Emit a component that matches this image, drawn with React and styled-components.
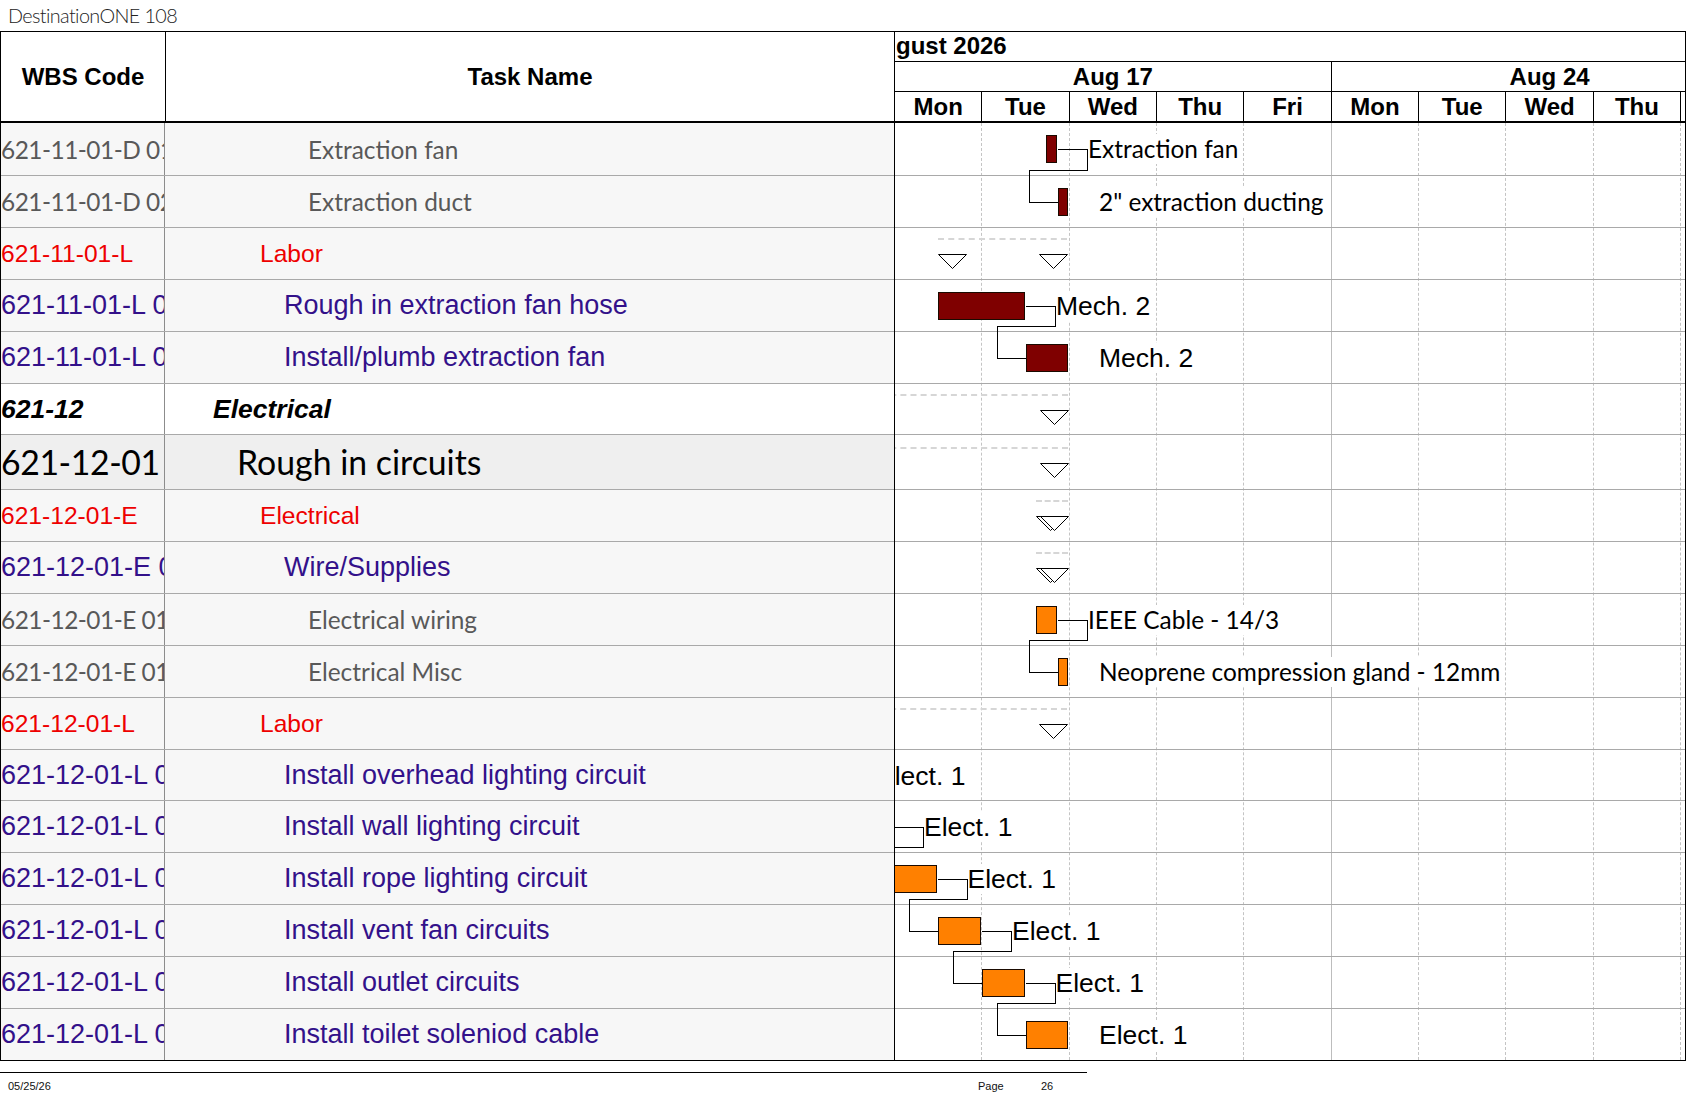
import React from 'react';
import styled, { createGlobalStyle } from 'styled-components';

const ARIAL = '"Liberation Sans", Arial, Helvetica, sans-serif';
const HUMANIST = 'Lato, "Open Sans", "Noto Sans", sans-serif';

const CHART_X = 895; // page x of the chart's inner left edge
const DAY = 87.35;
const DAYS = ['Mon', 'Tue', 'Wed', 'Thu', 'Fri', 'Mon', 'Tue', 'Wed', 'Thu', 'Fri'];

const MAROON = '#7f0000';
const ORANGE = '#ff8000';

// bar / summary positions are page x coordinates on the timeline
const ROWS = [
    { wbs: '621-11-01-D 01', name: 'Extraction fan', kind: 'detail', h: 53,
        bar: [1046, 1057], color: MAROON, label: 'Extraction fan', font: 'cal', link: true },
    { wbs: '621-11-01-D 02', name: 'Extraction duct', kind: 'detail', h: 52,
        bar: [1057.5, 1068], color: MAROON, label: '2" extraction ducting', font: 'cal' },
    { wbs: '621-11-01-L', name: 'Labor', kind: 'group', h: 52, summary: [938, 1067], start: true },
    { wbs: '621-11-01-L 01', name: 'Rough in extraction fan hose', kind: 'task', h: 52,
        bar: [937.5, 1025], color: MAROON, label: 'Mech. 2', link: true },
    { wbs: '621-11-01-L 02', name: 'Install/plumb extraction fan', kind: 'task', h: 52,
        bar: [1025.5, 1068], color: MAROON, label: 'Mech. 2' },
    { wbs: '621-12', name: 'Electrical', kind: 'summary', h: 51, summary: [860, 1068] },
    { wbs: '621-12-01', name: 'Rough in circuits', kind: 'phase', h: 55, summary: [860, 1068] },
    { wbs: '621-12-01-E', name: 'Electrical', kind: 'group', h: 52, summary: [1036, 1068], start: true },
    { wbs: '621-12-01-E 01', name: 'Wire/Supplies', kind: 'task', h: 52, summary: [1036, 1068], start: true },
    { wbs: '621-12-01-E 01.01', name: 'Electrical wiring', kind: 'detail', h: 52,
        bar: [1036, 1057], color: ORANGE, label: 'IEEE Cable - 14/3', font: 'cal', link: true },
    { wbs: '621-12-01-E 01.02', name: 'Electrical Misc', kind: 'detail', h: 52,
        bar: [1057.5, 1068], color: ORANGE, label: 'Neoprene compression gland - 12mm', font: 'cal' },
    { wbs: '621-12-01-L', name: 'Labor', kind: 'group', h: 52, summary: [860, 1067] },
    { wbs: '621-12-01-L 01', name: 'Install overhead lighting circuit', kind: 'task', h: 51,
        bar: [760, 846], color: ORANGE, label: 'Elect. 1', link: true },
    { wbs: '621-12-01-L 02', name: 'Install wall lighting circuit', kind: 'task', h: 52,
        bar: [800, 893], color: ORANGE, label: 'Elect. 1', link: true },
    { wbs: '621-12-01-L 03', name: 'Install rope lighting circuit', kind: 'task', h: 52,
        bar: [850, 936.5], color: ORANGE, label: 'Elect. 1', link: true },
    { wbs: '621-12-01-L 04', name: 'Install vent fan circuits', kind: 'task', h: 52,
        bar: [937.5, 981], color: ORANGE, label: 'Elect. 1', link: true },
    { wbs: '621-12-01-L 05', name: 'Install outlet circuits', kind: 'task', h: 52,
        bar: [981.5, 1024.5], color: ORANGE, label: 'Elect. 1', link: true },
    { wbs: '621-12-01-L 06', name: 'Install toilet soleniod cable', kind: 'task', h: 51, last: true,
        bar: [1025.5, 1068], color: ORANGE, label: 'Elect. 1' },
];

const KINDS = {
    detail: { color: '#595959', font: HUMANIST, size: 24.4, weight: 400, italic: false, indent: 143, bg: '#f7f7f7', track: -0.5 },
    group: { color: '#ee0000', font: ARIAL, size: 24.6, weight: 400, italic: false, indent: 95, bg: '#f7f7f7', track: 0 },
    task: { color: '#33118a', font: ARIAL, size: 27, weight: 400, italic: false, indent: 119, bg: '#f7f7f7', track: 0 },
    summary: { color: '#000', font: ARIAL, size: 26.5, weight: 700, italic: true, indent: 48, bg: '#fff', track: 0 },
    phase: { color: '#000', font: HUMANIST, size: 33.8, weight: 400, italic: false, indent: 72, bg: '#efefef', track: -0.4 },
};

const GlobalStyle = createGlobalStyle`
    html, body {
        margin: 0;
        padding: 0;
        background: #fff;
    }
    body {
        font-family: ${ARIAL};
        color: #000;
    }
`;

const Page = styled.div`
    width: 1687px;
    height: 1097px;
    position: relative;
    overflow: hidden;
`;

const Title = styled.div`
    height: 31px;
    box-sizing: border-box;
    padding: 3px 0 0 8px;
    font-family: ${HUMANIST};
    font-weight: 300;
    font-size: 19.8px;
    line-height: 24px;
    letter-spacing: -0.6px;
    color: #222;
`;

const Sheet = styled.div`
    width: 1686px;
    box-sizing: border-box;
    border: 1px solid #000;
    display: flex;
    flex-direction: column;
`;

const Header = styled.div`
    display: flex;
    height: 91px;
    box-sizing: border-box;
    border-bottom: 2px solid #000;
`;

const HeadCell = styled.div`
    width: ${(p) => p.$width}px;
    flex: 0 0 auto;
    box-sizing: border-box;
    border-right: 1px solid #000;
    display: flex;
    align-items: center;
    justify-content: center;
    font-weight: 700;
    font-size: 24px;
`;

const Timescale = styled.div`
    flex: 1;
    display: flex;
    flex-direction: column;
    overflow: hidden;
`;

const MonthRow = styled.div`
    height: 30px;
    box-sizing: border-box;
    border-bottom: 1px solid #000;
    font-weight: 700;
    font-size: 24px;
    line-height: 28px;
    white-space: nowrap;
    text-indent: -31px;
`;

const ScaleRow = styled.div`
    display: flex;
    height: ${(p) => p.$height}px;
    box-sizing: border-box;
    border-bottom: ${(p) => (p.$ruled ? '1px solid #000' : 'none')};
`;

const ScaleCell = styled.div`
    flex: 0 0 ${(p) => p.$width}px;
    box-sizing: border-box;
    border-right: 1px solid #000;
    display: flex;
    align-items: center;
    justify-content: center;
    font-weight: 700;
    font-size: 24px;
    white-space: nowrap;
`;

const Body = styled.div`
    display: flex;
`;

const Table = styled.div`
    width: 893px;
    flex: 0 0 auto;
    display: flex;
    flex-direction: column;
`;

const TableRow = styled.div`
    display: flex;
    height: ${(p) => p.$h}px;
    box-sizing: border-box;
    border-bottom: ${(p) => (p.$last ? 'none' : '1px solid #a9a9a9')};
    background: ${(p) => KINDS[p.$kind].bg};
    color: ${(p) => KINDS[p.$kind].color};
    font-family: ${(p) => KINDS[p.$kind].font};
    font-size: ${(p) => KINDS[p.$kind].size}px;
    font-weight: ${(p) => KINDS[p.$kind].weight};
    font-style: ${(p) => (KINDS[p.$kind].italic ? 'italic' : 'normal')};
`;

const WbsCell = styled.div`
    width: 164px;
    flex: 0 0 auto;
    box-sizing: border-box;
    border-right: 1px solid #8c8c8c;
    display: flex;
    align-items: center;
    overflow: hidden;
    white-space: nowrap;
    letter-spacing: ${(p) => p.$track}px;
`;

const NameCell = styled.div`
    flex: 1;
    display: flex;
    align-items: center;
    padding-left: ${(p) => p.$indent}px;
    white-space: nowrap;
    overflow: hidden;
`;

const Chart = styled.div`
    flex: 1;
    position: relative;
    overflow: hidden;
    border-left: 1px solid #000;
    display: flex;
    flex-direction: column;
`;

const GridLayer = styled.div`
    position: absolute;
    inset: 0;
    display: flex;
    z-index: 0;
`;

const DayLine = styled.div`
    flex: 0 0 ${DAY}px;
    box-sizing: border-box;
    border-right: 1px ${(p) => (p.$week ? 'solid #bdbdbd' : 'dashed #c4c4c4')};
`;

const ChartRow = styled.div`
    position: relative;
    height: ${(p) => p.$h}px;
    flex: 0 0 auto;
    box-sizing: border-box;
    border-bottom: ${(p) => (p.$last ? 'none' : '1px solid #a9a9a9')};
`;

const Bar = styled.div`
    position: absolute;
    z-index: 2;
    top: 12px;
    height: 28px;
    box-sizing: border-box;
    border: 1px solid #1a0a00;
    background: ${(p) => p.$color};
`;

const BarLabel = styled.div`
    position: absolute;
    z-index: 2;
    top: 11px;
    height: 30px;
    line-height: 30px;
    padding-right: 2px;
    background: #fff;
    color: #000;
    white-space: nowrap;
    font-family: ${(p) => (p.$cal ? HUMANIST : ARIAL)};
    font-size: ${(p) => (p.$cal ? 24.4 : 26.5)}px;
`;

const SummaryLine = styled.div`
    position: absolute;
    z-index: 1;
    top: ${(p) => 10 + p.$shift}px;
    height: 0;
    border-top: 2px dashed #d6d6d6;
`;

const Marker = styled.svg`
    position: absolute;
    z-index: 2;
    top: ${(p) => 26 + p.$shift}px;
    width: 29px;
    height: 15px;
`;

const LinkLayer = styled.svg`
    position: absolute;
    left: 0;
    top: 0;
    width: 100%;
    height: 100%;
    z-index: 1;
    pointer-events: none;
`;

const Footer = styled.div`
    width: 1087px;
    margin-top: 11px;
    border-top: 1px solid #000;
    display: flex;
    align-items: center;
    height: 26px;
    font-family: ${ARIAL};
    font-size: 11px;
    color: #111;
`;

const FootText = styled.span`
    width: ${(p) => p.$width}px;
    flex: 0 0 auto;
    box-sizing: border-box;
    padding-left: ${(p) => p.$pad || 0}px;
`;

function DownMarker({ x, shift }) {
    return (
        <Marker $shift={shift} style={{ left: x - CHART_X }} viewBox='0 0 29 15'>
            <polygon points='0.5,0.5 28.5,0.5 14.5,14.5' fill='#fff' stroke='#000' strokeWidth='1' />
        </Marker>
    );
}

function ChartContent({ row }) {
    const shift = Math.round((row.h - 52) / 2);
    if (row.summary) {
        const [x1, x2] = row.summary;
        return (
            <>
                <SummaryLine $shift={shift} style={{ left: x1 - CHART_X, width: x2 - x1 }} />
                {row.start && <DownMarker x={x1} shift={shift} />}
                <DownMarker x={x2 - 28} shift={shift} />
            </>
        );
    }
    if (!row.bar) return null;
    const [x1, x2] = row.bar;
    return (
        <>
            <Bar $color={row.color} style={{ left: x1 - CHART_X, width: x2 - x1 }} />
            <BarLabel $cal={row.font === 'cal'} style={{ left: x2 + 31 - CHART_X }}>
                {row.label}
            </BarLabel>
        </>
    );
}

// bar-to-label connectors and the finish-to-start links between rows
function Links() {
    const tops = [];
    let y = 0;
    ROWS.forEach((r) => {
        tops.push(y);
        y += r.h;
    });
    const px = (v) => Math.round(v) + 0.5;
    const lines = [];
    ROWS.forEach((r, i) => {
        if (!r.link) return;
        const next = ROWS[i + 1];
        const cy = tops[i] + 26;
        const labelX = r.bar[1] + 31 - CHART_X;
        const endX = r.bar[1] - CHART_X;
        const drop = tops[i] + r.h - 6;
        const nx = next.bar[0] - CHART_X;
        const ny = tops[i + 1] + 26;
        lines.push(`M${px(endX)} ${px(cy)} H${px(labelX - 1)}`);
        lines.push(`M${px(labelX - 1)} ${px(cy)} V${px(drop)} H${px(nx - 29)} V${px(ny)} H${px(nx)}`);
    });
    return (
        <LinkLayer>
            <path d={lines.join(' ')} fill='none' stroke='#000' strokeWidth='1' shapeRendering='crispEdges' />
        </LinkLayer>
    );
}

export default function App() {
    return (
        <Page>
            <GlobalStyle />
            <Title>DestinationONE 108</Title>
            <Sheet>
                <Header>
                    <HeadCell $width={165}>WBS Code</HeadCell>
                    <HeadCell $width={729}>Task Name</HeadCell>
                    <Timescale>
                        <MonthRow>August 2026</MonthRow>
                        <ScaleRow $height={30} $ruled>
                            <ScaleCell $width={DAY * 5}>Aug 17</ScaleCell>
                            <ScaleCell $width={DAY * 5}>Aug 24</ScaleCell>
                        </ScaleRow>
                        <ScaleRow $height={29}>
                            {DAYS.map((d, i) => (
                                <ScaleCell key={i} $width={DAY}>{d}</ScaleCell>
                            ))}
                        </ScaleRow>
                    </Timescale>
                </Header>
                <Body>
                    <Table>
                        {ROWS.map((r, i) => (
                            <TableRow key={i} $h={r.h} $kind={r.kind} $last={r.last}>
                                <WbsCell $track={KINDS[r.kind].track}>{r.wbs}</WbsCell>
                                <NameCell $indent={KINDS[r.kind].indent}>{r.name}</NameCell>
                            </TableRow>
                        ))}
                    </Table>
                    <Chart>
                        <GridLayer>
                            {DAYS.map((d, i) => (
                                <DayLine key={i} $week={i === 4} />
                            ))}
                        </GridLayer>
                        {ROWS.map((r, i) => (
                            <ChartRow key={i} $h={r.h} $last={r.last}>
                                <ChartContent row={r} />
                            </ChartRow>
                        ))}
                        <Links />
                    </Chart>
                </Body>
            </Sheet>
            <Footer>
                <FootText $width={978} $pad={8}>05/25/26</FootText>
                <FootText $width={63}>Page</FootText>
                <FootText $width={30}>26</FootText>
            </Footer>
        </Page>
    );
}
